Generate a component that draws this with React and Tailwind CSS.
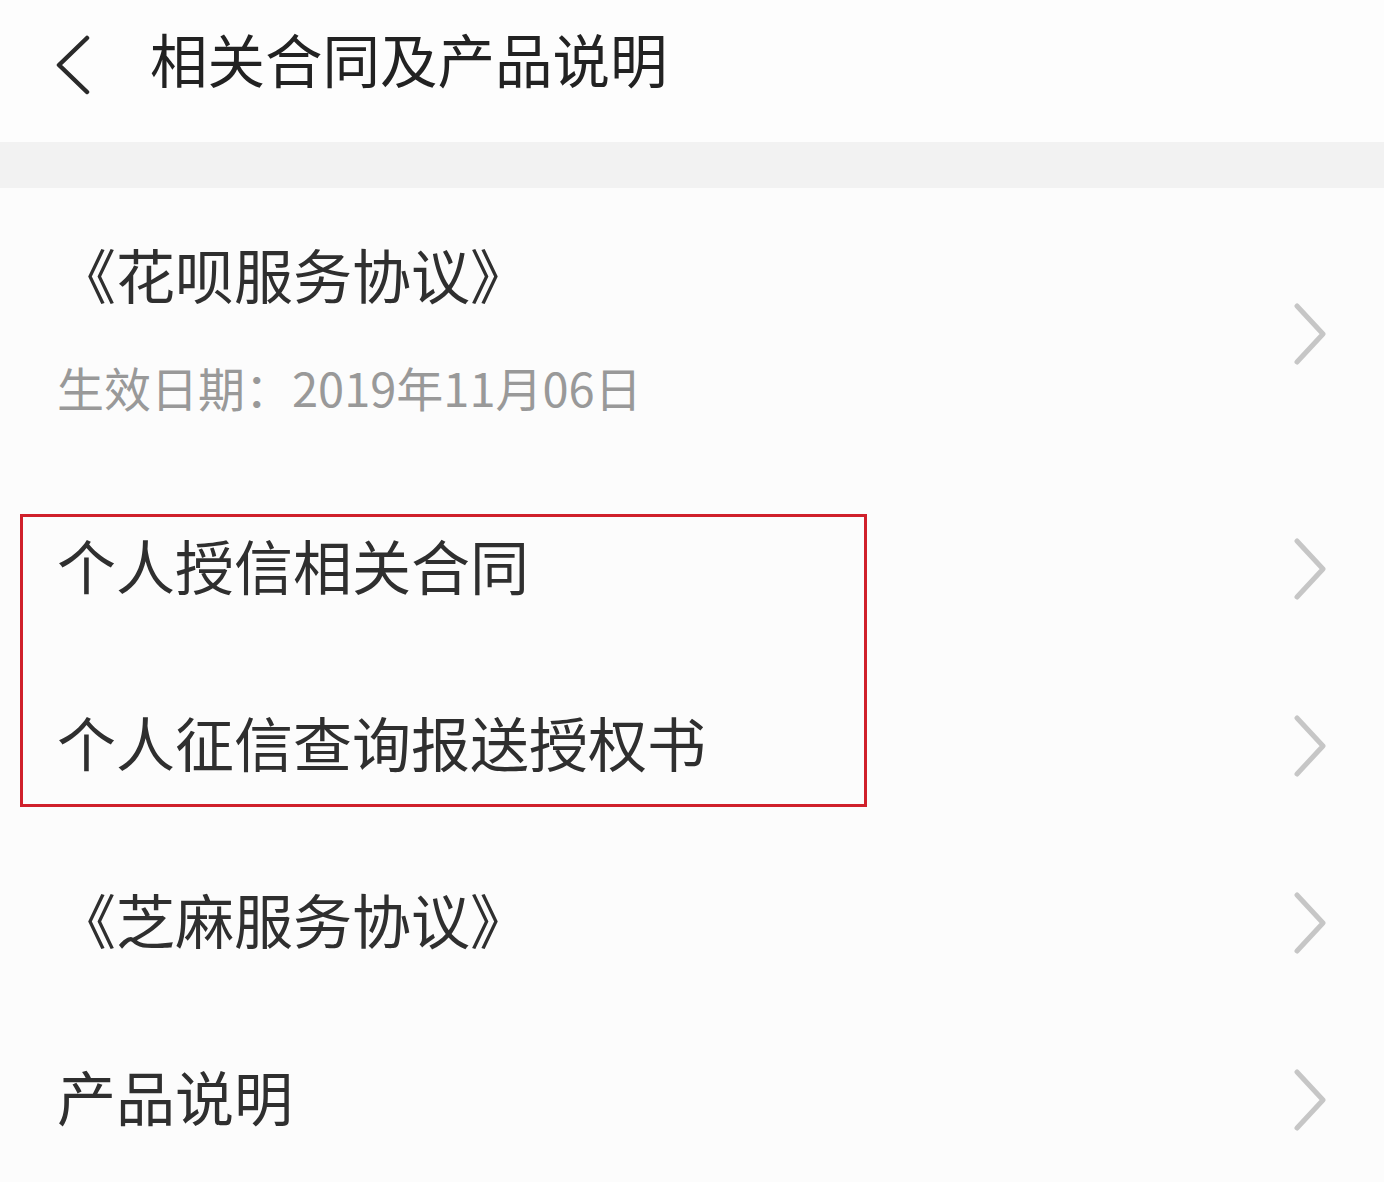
import React from 'react';

const font = { fontFamily: '"Noto Sans CJK SC", "Noto Sans", sans-serif' };

const Chevron = () => (
  <svg width="36" height="62" viewBox="0 0 36 62" className="shrink-0 ml-[2px]">
    <path d="M5 3 L31 31 L5 59" fill="none" stroke="#c6c6c6" strokeWidth="5" strokeLinecap="round" strokeLinejoin="round" />
  </svg>
);

const Row = ({ title, sub, tall }) => (
  <div className={`flex items-center justify-between pl-[57px] pr-[56px] ${tall ? 'h-[292px]' : 'h-[177px]'}`}>
    <div className={`flex flex-col ${tall ? 'pb-[15px]' : 'pb-[8px]'}`}>
      <div className="text-[59px] leading-none text-[#2f2f2f]">{title}</div>
      {sub && <div className="mt-[60px] text-[47px] leading-none text-[#999999]">{sub}</div>}
    </div>
    <Chevron />
  </div>
);

export default function App() {
  return (
    <div className="w-[1384px] h-[1182px] overflow-hidden bg-[#fcfcfc]" style={font}>
      <div className="h-[142px] flex items-center bg-[#fdfdfd]">
        <svg width="40" height="60" viewBox="0 0 40 60" className="ml-[53px] mr-[57px] -mt-[12px]">
          <path d="M34 3 L6 30 L34 57" fill="none" stroke="#2a2a2a" strokeWidth="4.5" strokeLinecap="round" strokeLinejoin="round" />
        </svg>
        <div className="text-[57.5px] leading-none text-[#222222] -mt-[25px]">相关合同及产品说明</div>
      </div>
      <div className="h-[46px] bg-[#f2f2f2]" />
      <Row title="《花呗服务协议》" sub="生效日期：2019年11月06日" tall />
      <div className="relative">
        <Row title="个人授信相关合同" />
        <Row title="个人征信查询报送授权书" />
        <div className="absolute left-[20px] top-[34px] w-[847px] h-[293px] border-[3px] border-[#d0202b] pointer-events-none" />
      </div>
      <Row title="《芝麻服务协议》" />
      <Row title="产品说明" />
    </div>
  );
}
